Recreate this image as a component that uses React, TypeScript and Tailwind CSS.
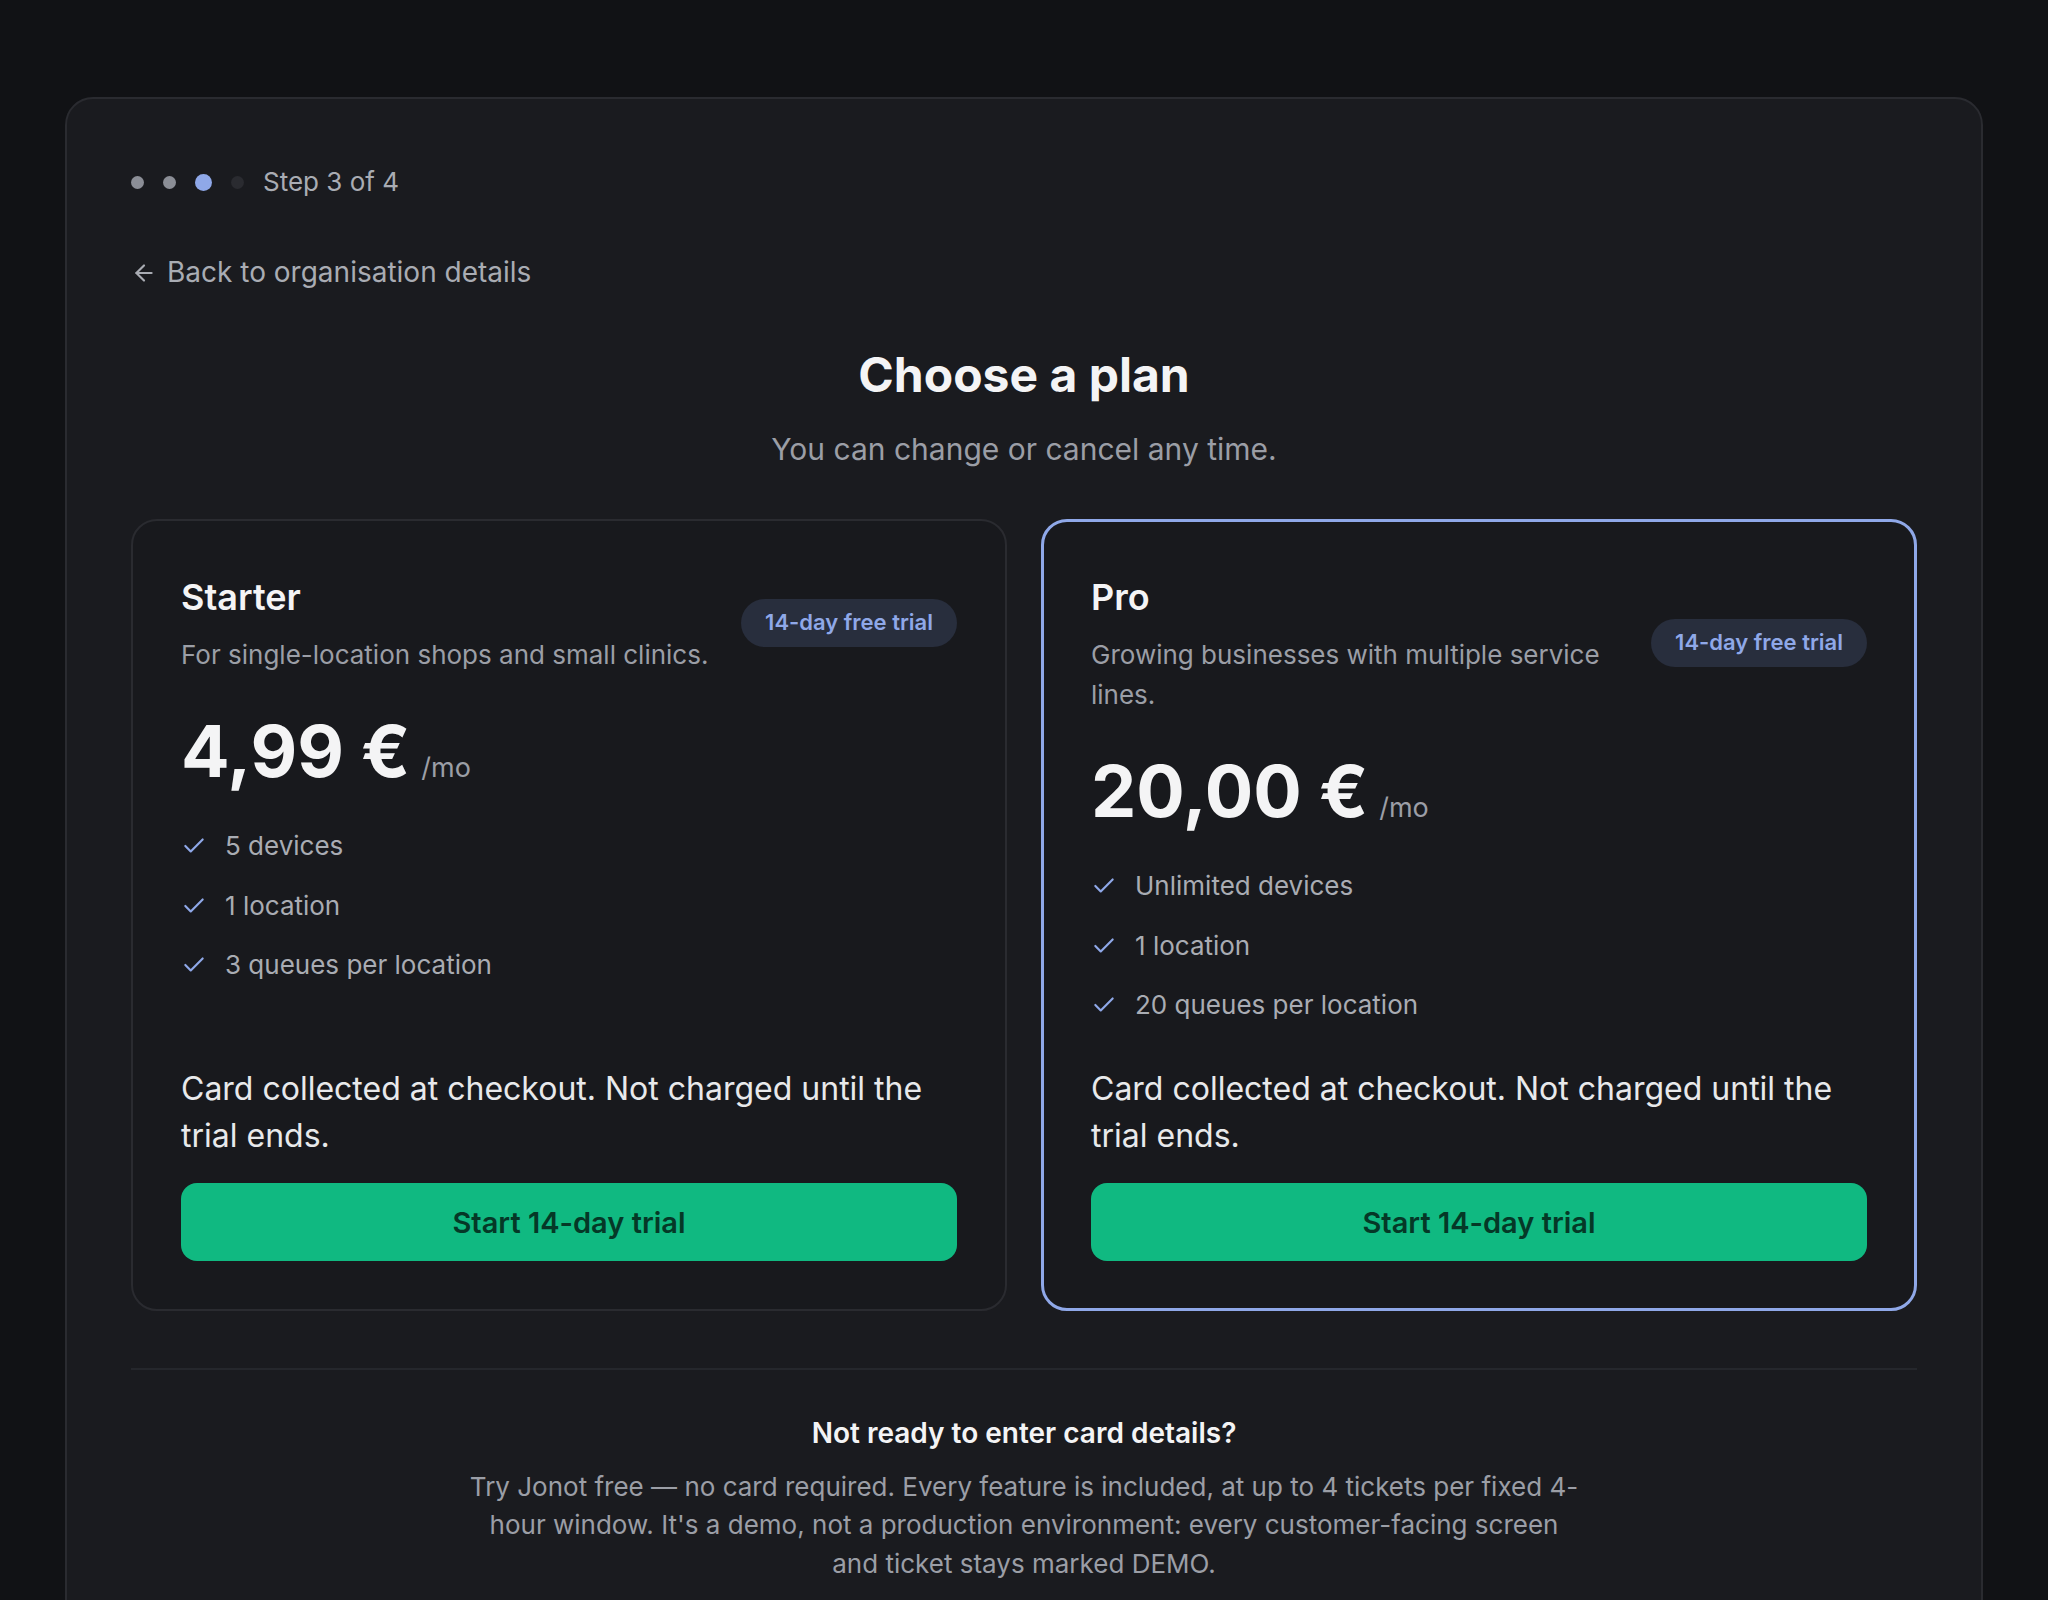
import React from "react";

const CheckIcon = () => (
  <svg
    width="26"
    height="26"
    viewBox="0 0 24 24"
    fill="none"
    stroke="#8fa8e8"
    strokeWidth="2"
    strokeLinecap="round"
    strokeLinejoin="round"
    className="shrink-0"
  >
    <path d="M20 6 9 17l-5-5" />
  </svg>
);

const ArrowLeft = () => (
  <svg
    width="26"
    height="26"
    viewBox="0 0 24 24"
    fill="none"
    stroke="currentColor"
    strokeWidth="2"
    strokeLinecap="round"
    strokeLinejoin="round"
    className="shrink-0"
  >
    <path d="m12 19-7-7 7-7" />
    <path d="M19 12H5" />
  </svg>
);

type Plan = {
  name: string;
  desc: string;
  price: string;
  features: string[];
  selected: boolean;
};

const plans: Plan[] = [
  {
    name: "Starter",
    desc: "For single-location shops and small clinics.",
    price: "4,99 €",
    features: ["5 devices", "1 location", "3 queues per location"],
    selected: false,
  },
  {
    name: "Pro",
    desc: "Growing businesses with multiple service lines.",
    price: "20,00 €",
    features: ["Unlimited devices", "1 location", "20 queues per location"],
    selected: true,
  },
];

function PlanCard({ plan }: { plan: Plan }) {
  return (
    <div
      className={
        plan.selected
          ? "flex flex-col rounded-[26px] border-[3px] border-[#8fa8e8] bg-[#18191d] px-[47px] pt-[49px] pb-[47px]"
          : "flex flex-col rounded-[26px] border-2 border-[#2a2b30] bg-[#18191d] px-[48px] pt-[50px] pb-[48px]"
      }
    >
      <div className="flex items-center justify-between gap-[24px]">
        <div className="min-w-0 flex-1">
          <div className="text-[36px] leading-[52px] font-semibold text-[#f4f4f5]">{plan.name}</div>
          <div className="mt-[12px] text-[26px] leading-[40px] text-[#9b9ea6]">{plan.desc}</div>
        </div>
        <div className="flex h-[48px] shrink-0 items-center rounded-full bg-[#282e3d] px-[24px] text-[22px] font-semibold text-[#8fa8e8]">
          14-day free trial
        </div>
      </div>

      <div className="mt-[40px] flex items-baseline gap-[11px]">
        <span className="text-[72px] leading-none font-bold text-[#f4f4f5]">{plan.price}</span>
        <span className="text-[27px] text-[#9b9ea6]">/mo</span>
      </div>

      <ul className="mt-[38px] flex flex-col gap-[19.5px]">
        {plan.features.map((f) => (
          <li key={f} className="flex items-center gap-[18px] text-[26px] leading-[40px] text-[#a9acb3]">
            <CheckIcon />
            <span>{f}</span>
          </li>
        ))}
      </ul>

      <p className="mt-auto pt-[40px] text-[32px] leading-[47px] text-[#e8e9eb]">
        Card collected at checkout. Not charged until the trial ends.
      </p>
      <button className="mt-[24px] h-[78px] w-full rounded-[16px] bg-[#10b981] text-[29px] font-semibold text-[#053827]">
        Start 14-day trial
      </button>
    </div>
  );
}

export default function App() {
  return (
    <div className="min-h-screen bg-[#111215] px-[65px] pt-[97px] font-['Inter','Noto_Sans',sans-serif]">
      <div className="rounded-[28px] border-2 border-[#2a2b30] bg-[#1a1b1f] px-[64px] pt-[64px] pb-[80px]">
        <div className="flex items-center gap-[19px]">
          <span className="h-[13px] w-[13px] rounded-full bg-[#8b8e96]" />
          <span className="h-[13px] w-[13px] rounded-full bg-[#8b8e96]" />
          <span className="h-[17px] w-[17px] rounded-full bg-[#8fa8e8]" />
          <span className="h-[13px] w-[13px] rounded-full bg-[#2a2b30]" />
          <span className="text-[26px] leading-[38.4px] text-[#a9acb3]">Step 3 of 4</span>
        </div>

        <div className="mt-[52px] flex items-center gap-[10px] text-[28px] leading-[38.4px] text-[#a9acb3]">
          <ArrowLeft />
          <span>Back to organisation details</span>
        </div>

        <h1 className="mt-[54px] text-center text-[48px] leading-[58px] font-bold text-[#f4f4f5]">Choose a plan</h1>
        <p className="mt-[23px] text-center text-[30px] leading-[45px] text-[#9b9ea6]">
          You can change or cancel any time.
        </p>

        <div className="mt-[47px] grid grid-cols-2 gap-[34px]">
          {plans.map((p) => (
            <PlanCard key={p.name} plan={p} />
          ))}
        </div>

        <div className="mt-[57px] h-[2px] bg-[#25272c]" />

        <h2 className="mt-[44px] text-center text-[28px] leading-[38.4px] font-semibold text-[#f4f4f5]">
          Not ready to enter card details?
        </h2>
        <p className="mx-auto mt-[15px] max-w-[1113px] text-center text-[26px] leading-[38.5px] text-[#9b9ea6]">
          Try Jonot free — no card required. Every feature is included, at up to 4 tickets per fixed 4-hour window.
          It's a demo, not a production environment: every customer-facing screen and ticket stays marked DEMO.
        </p>
      </div>
    </div>
  );
}
